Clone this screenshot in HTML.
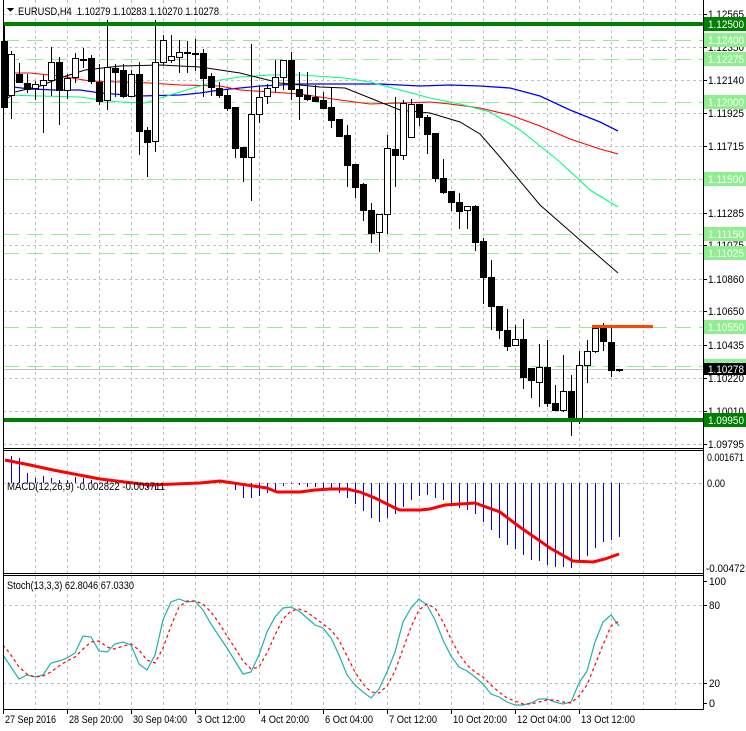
<!DOCTYPE html>
<html><head><meta charset="utf-8"><style>
html,body{margin:0;padding:0;background:#fff;}
svg{display:block;font-family:"Liberation Sans",sans-serif;}
</style></head><body>
<svg id="s" width="746" height="731" xmlns="http://www.w3.org/2000/svg" shape-rendering="crispEdges"></svg>
<script>
var S=document.getElementById('s'),o='';
function L(x1,y1,x2,y2,c,w,d){o+='<line x1="'+x1+'" y1="'+y1+'" x2="'+x2+'" y2="'+y2+'" stroke="'+c+'" stroke-width="'+(w||1)+'"'+(d?' stroke-dasharray="'+d+'"':'')+'/>';}
function R(x,y,w,h,f,s){o+='<rect x="'+x+'" y="'+y+'" width="'+w+'" height="'+h+'" fill="'+f+'"'+(s?' stroke="'+s+'"':'')+'/>';}
function T(x,y,t,c,sz,len){o+='<text x="'+x+'" y="'+y+'" fill="'+(c||'#000')+'" font-size="'+(sz||11)+'"'+(len?' textLength="'+len+'" lengthAdjust="spacingAndGlyphs"':'')+'>'+t+'</text>';}
function P(pts,c,w,d){o+='<polyline fill="none" stroke="'+c+'" stroke-width="'+(w||1)+'"'+(d?' stroke-dasharray="'+d+'"':'')+' shape-rendering="auto" points="'+pts.map(p=>p.join(',')).join(' ')+'"/>';}
function py(p){return 24+(1.125-p)*15529;}
for(var x=35;x<703;x+=32){L(x+.5,0,x+.5,449,'#c0c0c0',1,'3,3');L(x+.5,451,x+.5,574,'#c0c0c0',1,'3,3');L(x+.5,576,x+.5,709,'#c0c0c0',1,'3,3');}
var gl=[1.12565,1.12350,1.12140,1.11925,1.11715,1.11500,1.11285,1.11075,1.10860,1.10650,1.10435,1.10220,1.10010,1.09795];
gl.forEach(p=>{var y=Math.round(py(p))+.5;L(3,y,703,y,'#c0c0c0',1,'3,3');});
var lv=[1.12400,1.12275,1.12000,1.11500,1.11150,1.11025,1.10550,1.10300];
lv.forEach(p=>{var y=Math.round(py(p))+.5;L(3,y,703,y,'#90ee90',1,'16,8');});
L(3,369.5,703,369.5,'#c0c0c0',1);
P([[5,86],[30,89],[55,90],[80,90],[100,93],[140,96],[180,95],[200,93],[220,90],[260,86],[300,84],[340,84],[380,84],[400,85],[420,86],[450,85],[480,86],[510,88],[540,96],[570,110],[600,122],[618,131]],'#0000ff',1.3);
P([[5,73],[30,73],[60,76],[90,81],[120,82],[150,83],[180,85],[220,86],[240,90],[270,92],[300,94],[340,100],[370,104],[400,103],[430,102],[450,104],[480,108],[510,115],[540,126],[570,139],[600,149],[618,154]],'#ff0000',1.1);
P([[5,95],[40,96],[80,97],[100,100],[120,102],[145,103],[170,95],[200,86],[220,80],[240,77],[270,75],[300,75],[345,78],[370,82],[400,90],[430,98],[460,104],[490,112],[520,130],[560,162],[590,190],[618,207]],'#00ff7f',1.1);
P([[8,98],[15,92],[40,86],[60,78],[85,70],[120,66],[160,65],[200,67],[240,73],[280,83],[320,87],[345,88],[375,100],[400,110],[430,113],[460,122],[480,134],[500,157],[540,205],[580,240],[618,273]],'#000',1);
var C=[[4,25,107,41,107,0],[11,51,119,54,95,1],[19,63,82,74,82,0],[27,74,93,83,89,0],[35,81,100,84,88,1],[43,75,133,80,85,1],[51,47,96,62,80,1],[59,57,125,62,90,0],[67,74,99,78,90,1],[75,53,83,58,77,1],[83,48,68,59,60,0],[91,55,84,58,81,0],[99,64,105,82,101,0],[107,20,110,67,100,1],[115,64,97,68,72,0],[123,64,98,70,96,0],[131,70,96,74,96,1],[139,62,155,74,131,0],[147,127,177,130,142,0],[155,20,152,62,141,1],[163,35,65,40,62,1],[171,35,63,56,60,1],[179,40,73,52,57,1],[187,41,73,52,53,0],[195,39,71,53,54,0],[203,49,97,53,78,0],[211,73,96,76,87,0],[219,82,98,88,95,0],[227,89,111,95,108,0],[235,107,158,107,148,0],[243,147,182,147,157,0],[251,44,201,114,157,1],[259,86,123,97,114,1],[267,84,104,88,96,1],[275,60,92,77,87,1],[283,60,90,60,77,1],[291,52,100,60,89,0],[299,72,120,89,96,0],[307,72,101,95,99,0],[315,85,102,97,101,0],[323,92,108,100,108,0],[331,88,128,107,120,0],[339,119,137,119,136,0],[347,125,187,135,165,0],[355,164,198,164,187,0],[363,183,221,184,210,0],[371,203,243,210,233,0],[379,214,252,214,232,1],[387,135,234,148,214,1],[395,97,187,149,155,0],[403,100,160,103,155,1],[411,99,137,104,137,1],[419,104,126,104,117,0],[427,115,154,117,134,0],[435,133,182,133,178,0],[443,159,194,178,192,0],[451,191,211,191,202,0],[459,193,229,202,211,0],[467,206,229,206,210,1],[475,205,251,206,242,0],[483,238,304,241,277,0],[491,260,330,277,306,0],[499,306,339,306,330,0],[507,309,351,330,346,0],[515,325,345,339,345,1],[523,319,389,339,377,0],[531,368,398,368,380,0],[539,344,407,367,382,1],[547,340,407,367,403,0],[555,385,410,403,410,0],[563,355,412,391,410,1],[571,375,436,391,420,0],[579,351,424,365,421,1],[587,340,383,351,365,1],[595,325,353,328,351,1],[603,323,351,328,341,0],[611,326,377,342,370,0],[619,369,372,369,370,0]];
C.forEach(c=>{L(c[0]+.5,c[1],c[0]+.5,c[2],'#000',1);var h=Math.max(1,c[4]-c[3]);if(c[5])R(c[0]-3+.5,c[3]+.5,6,h,'#fff','#000');else R(c[0]-3,c[3],7,h+1,'#000');});
L(616,369.5,623,369.5,'#000',1);
R(3,22,700,4,'#008000');R(3,418,700,4,'#008000');
R(592,325,61,3,'#ff4500');
var H=[[3,456],[11,456],[19,458],[27,473],[35,478],[43,476],[51,478],[59,480],[67,480],[75,477],[83,478],[91,480],[99,483],[107,481],[115,481],[123,482],[131,482],[139,484],[147,488],[155,490],[163,486],[171,485],[179,484],[187,485],[195,483],[203,482],[211,483],[219,480],[227,483],[235,490],[243,498],[251,498],[259,496],[267,493],[275,491],[283,486],[291,484],[299,485],[307,487],[315,487],[323,488],[331,488],[339,493],[347,498],[355,504],[363,511],[371,518],[379,522],[387,518],[395,514],[403,507],[411,500],[419,496],[427,495],[435,498],[443,500],[451,504],[459,508],[467,510],[475,514],[483,522],[491,530],[499,538],[507,545],[515,549],[523,555],[531,560],[539,561],[547,565],[555,567],[563,567],[571,568],[579,563],[587,556],[595,548],[603,542],[611,540],[619,537]];
L(3,483.5,703,483.5,'#c0c0c0',1,'3,3');
H.forEach(h=>L(h[0]+.5,483,h[0]+.5,h[1],'#0000dd',1.2));
P([[5,460],[30,465],[53,470],[100,479],[150,485],[200,483],[220,481],[267,488],[277,492],[300,492],[315,490],[330,489],[347,489],[360,492],[375,498],[385,503],[395,508],[400,510],[420,510],[430,509],[445,505],[460,504],[475,503],[500,512],[517,525],[550,548],[573,561],[593,562],[605,559],[619,554]],'#ff0000',3);
var st=[[3,655],[11,667],[19,679],[27,675],[35,677],[43,675],[51,663],[59,661],[67,658],[75,653],[83,636],[91,637],[99,651],[107,652],[115,644],[123,642],[131,645],[139,664],[147,670],[155,655],[163,620],[171,602],[179,599],[187,602],[195,601],[203,610],[211,624],[219,636],[227,648],[235,661],[243,674],[251,672],[259,655],[267,632],[275,617],[283,608],[291,607],[299,611],[307,618],[315,625],[323,628],[331,638],[339,655],[347,675],[355,685],[363,692],[371,698],[379,689],[387,672],[395,652],[403,622],[411,608],[419,599],[427,605],[435,620],[443,640],[451,656],[459,667],[467,671],[475,677],[483,684],[491,694],[499,697],[507,702],[515,705],[523,705],[531,703],[539,699],[547,699],[555,702],[563,704],[571,702],[579,683],[587,671],[595,642],[603,622],[611,615],[619,626]];
var sg=st.map((p,i)=>{var a=st[Math.max(0,i-2)][1],b=st[Math.max(0,i-1)][1];return [p[0],Math.round((a+b+p[1])/3)];});
sg[0][1]=645;sg[1][1]=655;
[605,683].forEach(y=>L(3,y+.5,703,y+.5,'#c0c0c0',1,'3,3'));
P(st,'#20b2aa',1.2);
P(sg,'#ff0000',1.2,'3,3');
L(3.5,0,3.5,710,'#000',1);L(703.5,0,703.5,710,'#000',1);
L(3,448.5,704,448.5,'#000',1);L(3,450.5,704,450.5,'#000',1);
L(3,573.5,704,573.5,'#000',1);L(3,575.5,704,575.5,'#000',1);
L(3,709.5,704,709.5,'#000',1);
var pl=[1.12565,1.12350,1.12140,1.11925,1.11715,1.11285,1.11075,1.10860,1.10650,1.10435,1.10220,1.10010,1.09795];
pl.forEach(p=>{var y=Math.round(py(p));L(703,y+.5,707,y+.5,'#000');T(708,y+4,p.toFixed(5),'#000',11,36);});
lv.forEach(p=>{var y=Math.round(py(p));R(704,y-7,42,14,'#90ee90');T(708,y+4,p.toFixed(5),'#fff',11,36);});
R(704,17,42,14,'#008000');T(708,28,'1.12500','#fff',11,36);
R(704,413,42,14,'#008000');T(708,424,'1.09950','#fff',11,36);
R(704,363,42,12,'#000');T(708,373,'1.10278','#fff',11,36);
T(707,461,'0.001671','#000',11,37);T(707,487,'0.00','#000',11,18);T(706,572,'-0.00472','#000',11,39);
[[100,581,17],[80,605,11],[20,683,11],[0,703,6]].forEach(a=>{L(703,a[1]+.5,707,a[1]+.5,'#000');T(709,a[1]+4,a[0],'#000',11,a[2]);});
o+='<polygon points="7,8 14,8 10.5,12" fill="#000"/>';
T(18,15,'EURUSD,H4&#160;&#160;1.10279 1.10283 1.10270 1.10278','#000',11,201);
T(7,490,'MACD(12,26,9) -0.002822 -0.003711','#000',11,158);
T(7,589,'Stoch(13,3,3) 62.8046 67.0330','#000',11,127);
var tl=[[3,'27 Sep 2016',51],[67,'28 Sep 20:00',54],[131,'30 Sep 04:00',54],[195,'3 Oct 12:00',48],[259,'4 Oct 20:00',48],[323,'6 Oct 04:00',48],[387,'7 Oct 12:00',48],[451,'10 Oct 20:00',54],[515,'12 Oct 04:00',54],[579,'13 Oct 12:00',54]];
tl.forEach(t=>{L(t[0]+.5,710,t[0]+.5,714,'#000');T(t[0]+2,723,t[1],'#000',11,t[2]);});
S.innerHTML=o;
</script>
</body></html>
